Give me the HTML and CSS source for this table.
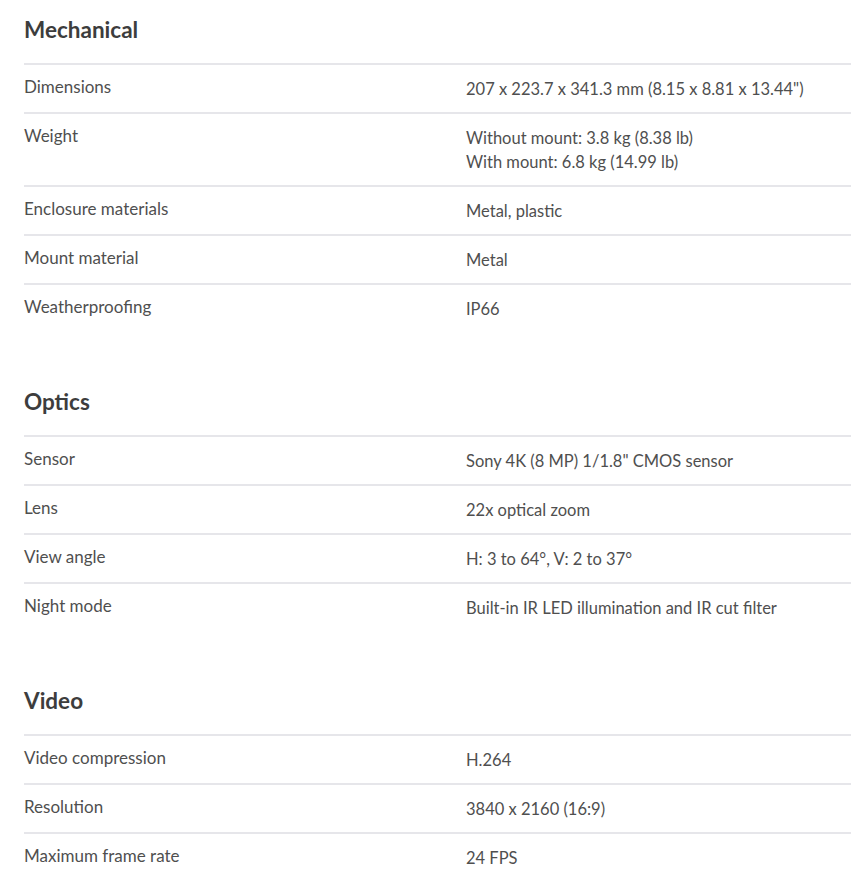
FILE: index.html
```html
<!DOCTYPE html>
<html lang="en">
<head>
<meta charset="utf-8">
<title>Specifications</title>
<link rel="stylesheet" href="styles.css">
</head>
<body>
<main class="specs">
  <section class="spec-section">
    <h2 class="spec-title">Mechanical</h2>
    <div class="spec-row"><div class="spec-label">Dimensions</div><div class="spec-value">207 x 223.7 x 341.3 mm (8.15 x 8.81 x 13.44")</div></div>
    <div class="spec-row"><div class="spec-label">Weight</div><div class="spec-value">Without mount: 3.8 kg (8.38 lb)<br>With mount: 6.8 kg (14.99 lb)</div></div>
    <div class="spec-row"><div class="spec-label">Enclosure materials</div><div class="spec-value">Metal, plastic</div></div>
    <div class="spec-row"><div class="spec-label">Mount material</div><div class="spec-value">Metal</div></div>
    <div class="spec-row"><div class="spec-label">Weatherproofing</div><div class="spec-value">IP66</div></div>
  </section>
  <section class="spec-section">
    <h2 class="spec-title">Optics</h2>
    <div class="spec-row"><div class="spec-label">Sensor</div><div class="spec-value">Sony 4K (8 MP) 1/1.8" CMOS sensor</div></div>
    <div class="spec-row"><div class="spec-label">Lens</div><div class="spec-value">22x optical zoom</div></div>
    <div class="spec-row"><div class="spec-label">View angle</div><div class="spec-value">H: 3 to 64°, V: 2 to 37°</div></div>
    <div class="spec-row"><div class="spec-label">Night mode</div><div class="spec-value">Built-in IR LED illumination and IR cut filter</div></div>
  </section>
  <section class="spec-section">
    <h2 class="spec-title">Video</h2>
    <div class="spec-row"><div class="spec-label">Video compression</div><div class="spec-value">H.264</div></div>
    <div class="spec-row"><div class="spec-label">Resolution</div><div class="spec-value">3840 x 2160 (16:9)</div></div>
    <div class="spec-row"><div class="spec-label">Maximum frame rate</div><div class="spec-value">24 FPS</div></div>
  </section>
</main>
</body>
</html>
```
FILE: styles.css
```css
html, body {
  margin: 0;
  padding: 0;
  background: #ffffff;
}

body {
  font-family: Lato, "Open Sans", Arial, sans-serif;
  color: #4f4f4f;
  overflow: hidden;
}

.specs {
  padding-left: 24px;
}

.spec-section {
  padding-top: 15px;
  margin-bottom: 40px;
}

.spec-title {
  margin: 0 0 18px 0;
  font-size: 22.5px;
  line-height: 30px;
  font-weight: 700;
  color: #3d3d3d;
}

.spec-row {
  display: grid;
  grid-template-columns: 442px 1fr;
  border-top: 2px solid #e6e6ea;
  padding: 10px 0 13px 0;
  line-height: 24px;
}

.spec-label {
  font-size: 17px;
}

.spec-value {
  font-size: 16.5px;
  padding-top: 2px;
  margin-bottom: -2px;
}
```
